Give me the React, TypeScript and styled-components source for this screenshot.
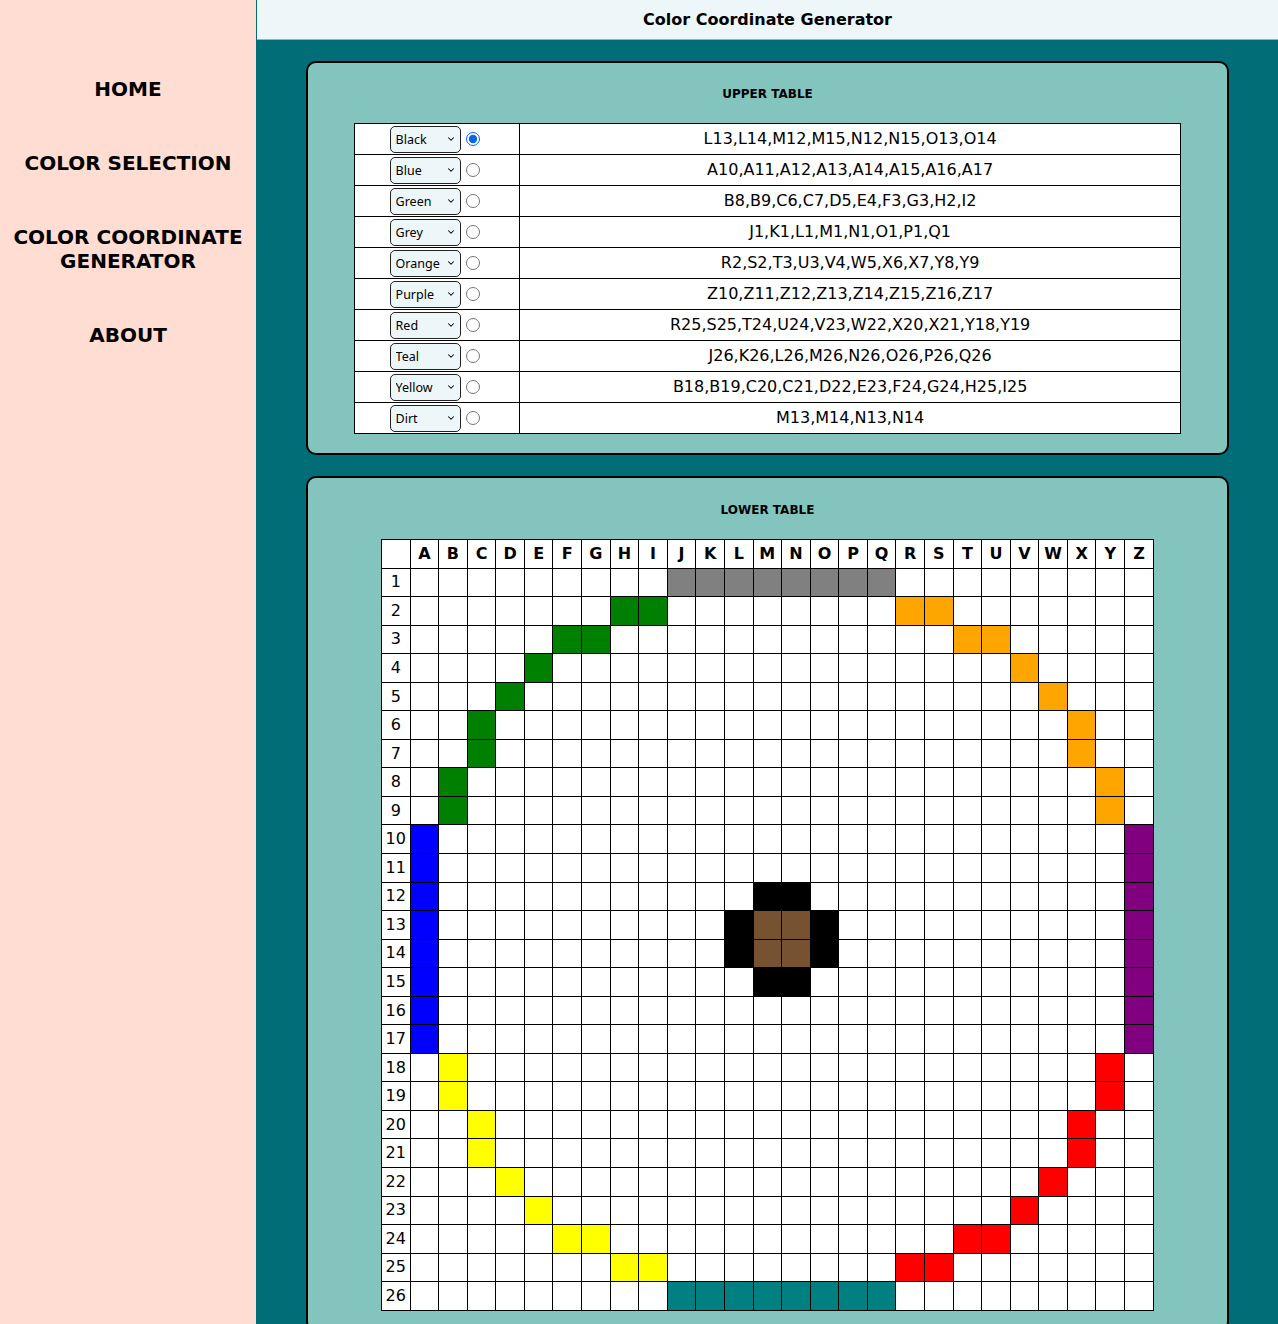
import React from "react";
import styled, { createGlobalStyle } from "styled-components";
import { ChevronDown } from "lucide-react";

const GlobalStyle = createGlobalStyle`
  html, body { margin: 0; padding: 0; }
  body {
    font-family: Verdana, "DejaVu Sans", sans-serif;
    color: #000;
    background: #006d77;
  }
  * { box-sizing: border-box; }
`;

const Page = styled.div`
  display: grid;
  grid-template-columns: 256px 1fr;
  min-height: 100vh;
`;

const Sidebar = styled.nav`
  background: #ffddd2;
  display: flex;
  flex-direction: column;
  align-items: center;
  gap: 50px;
  padding: 77px 6px 0;
`;

const NavItem = styled.a`
  font-family: Verdana, "DejaVu Sans", sans-serif;
  font-weight: bold;
  font-size: 20px;
  line-height: 24px;
  text-align: center;
  color: #000;
  text-decoration: none;
  text-transform: uppercase;
`;

const Main = styled.main`
  background: #006d77;
  display: flex;
  flex-direction: column;
  padding-left: 1px;
`;

const Header = styled.header`
  background: #edf6f9;
  height: 40px;
  border-bottom: 1px solid #a8adaf;
  display: flex;
  align-items: center;
  justify-content: center;
`;

const Title = styled.h1`
  margin: 0;
  font-size: 16px;
  font-weight: bold;
  line-height: 20px;
`;

const Content = styled.div`
  display: flex;
  flex-direction: column;
  align-items: center;
  gap: 21px;
  padding-top: 21px;
`;

const Card = styled.section<{ $top: number; $gap: number }>`
  width: 923px;
  background: #83c5be;
  border: 2px solid #000;
  border-radius: 10px;
  padding: ${(p) => p.$top}px 0 19px;
  display: flex;
  flex-direction: column;
  align-items: center;
  gap: ${(p) => p.$gap}px;
`;

const CardTitle = styled.h2`
  margin: 0;
  font-size: 12px;
  line-height: 15px;
  font-weight: bold;
  text-transform: uppercase;
`;

const UpperTable = styled.table`
  width: 90%;
  border-collapse: collapse;
  background: #fff;
  table-layout: fixed;
`;

const UpperRow = styled.tr`
  height: 31px;
`;

const ControlCell = styled.td`
  width: 20%;
  border: 1px solid #000;
  padding: 1px 0;
  text-align: center;
  white-space: nowrap;
`;

const CoordCell = styled.td`
  border: 1px solid #000;
  padding: 0;
  text-align: center;
  font-size: 16px;
  line-height: 20px;
`;

const ControlWrap = styled.div`
  display: inline-flex;
  align-items: center;
  gap: 5px;
  padding-right: 2px;
`;

const SelectWrap = styled.span`
  position: relative;
  display: inline-block;
  width: 71px;
  height: 27px;
`;

const ColorSelect = styled.select`
  appearance: none;
  -webkit-appearance: none;
  width: 71px;
  height: 27px;
  font-family: "Noto Sans", "Open Sans", sans-serif;
  font-size: 12.5px;
  background: #edf6f9;
  border: 1px solid #222;
  border-radius: 5px;
  padding: 0 16px 0 5px;
  color: #000;
`;

const Arrow = styled(ChevronDown)`
  position: absolute;
  right: 5px;
  top: 8px;
  width: 10px;
  height: 10px;
  color: #000;
  pointer-events: none;
`;

const Radio = styled.input`
  width: 14px;
  height: 14px;
  margin: 0 3px 0 0;
  accent-color: #0b66e4;
`;

const Grid = styled.table`
  width: 773px;
  border-collapse: collapse;
  table-layout: fixed;
  background: #fff;
`;

const GridRow = styled.tr`
  height: 28.56px;
`;

const HeadCell = styled.th`
  border: 1px solid #000;
  padding: 0;
  font-size: 16px;
  font-weight: bold;
  text-align: center;
  line-height: 20px;
`;

const NumCell = styled.td`
  border: 1px solid #000;
  padding: 0;
  font-size: 16px;
  text-align: center;
  line-height: 20px;
`;

const Cell = styled.td<{ $color?: string }>`
  border: 1px solid #000;
  padding: 0;
  background: ${(p) => p.$color ?? "#fff"};
`;

const colorDefs: { name: string; color: string; coords: string[] }[] = [
  { name: "Black", color: "#000000", coords: ["L13", "L14", "M12", "M15", "N12", "N15", "O13", "O14"] },
  { name: "Blue", color: "#0000ff", coords: ["A10", "A11", "A12", "A13", "A14", "A15", "A16", "A17"] },
  { name: "Green", color: "#008000", coords: ["B8", "B9", "C6", "C7", "D5", "E4", "F3", "G3", "H2", "I2"] },
  { name: "Grey", color: "#808080", coords: ["J1", "K1", "L1", "M1", "N1", "O1", "P1", "Q1"] },
  { name: "Orange", color: "#ffa500", coords: ["R2", "S2", "T3", "U3", "V4", "W5", "X6", "X7", "Y8", "Y9"] },
  { name: "Purple", color: "#800080", coords: ["Z10", "Z11", "Z12", "Z13", "Z14", "Z15", "Z16", "Z17"] },
  { name: "Red", color: "#ff0000", coords: ["R25", "S25", "T24", "U24", "V23", "W22", "X20", "X21", "Y18", "Y19"] },
  { name: "Teal", color: "#008080", coords: ["J26", "K26", "L26", "M26", "N26", "O26", "P26", "Q26"] },
  { name: "Yellow", color: "#ffff00", coords: ["B18", "B19", "C20", "C21", "D22", "E23", "F24", "G24", "H25", "I25"] },
  { name: "Dirt", color: "#775230", coords: ["M13", "M14", "N13", "N14"] },
];

const letters = "ABCDEFGHIJKLMNOPQRSTUVWXYZ".split("");
const names = colorDefs.map((c) => c.name);

const cellColor: Record<string, string> = {};
colorDefs.forEach((c) => c.coords.forEach((k) => (cellColor[k] = c.color)));

export default function App() {
  return (
    <>
      <GlobalStyle />
      <Page>
        <Sidebar>
          <NavItem>Home</NavItem>
          <NavItem>Color Selection</NavItem>
          <NavItem>Color Coordinate Generator</NavItem>
          <NavItem>About</NavItem>
        </Sidebar>
        <Main>
          <Header>
            <Title>Color Coordinate Generator</Title>
          </Header>
          <Content>
            <Card $top={24} $gap={21}>
              <CardTitle>Upper Table</CardTitle>
              <UpperTable>
                <tbody>
                  {colorDefs.map((c, i) => (
                    <UpperRow key={c.name}>
                      <ControlCell>
                        <ControlWrap>
                          <SelectWrap>
                            <ColorSelect defaultValue={c.name}>
                              {names.map((n) => (
                                <option key={n} value={n}>
                                  {n}
                                </option>
                              ))}
                            </ColorSelect>
                            <Arrow strokeWidth={2.5} />
                          </SelectWrap>
                          <Radio type="radio" name="active" defaultChecked={i === 0} />
                        </ControlWrap>
                      </ControlCell>
                      <CoordCell>{c.coords.join(",")}</CoordCell>
                    </UpperRow>
                  ))}
                </tbody>
              </UpperTable>
            </Card>
            <Card $top={25} $gap={21}>
              <CardTitle>Lower Table</CardTitle>
              <Grid>
                <thead>
                  <GridRow>
                    <HeadCell />
                    {letters.map((l) => (
                      <HeadCell key={l}>{l}</HeadCell>
                    ))}
                  </GridRow>
                </thead>
                <tbody>
                  {Array.from({ length: 26 }, (_, r) => (
                    <GridRow key={r}>
                      <NumCell>{r + 1}</NumCell>
                      {letters.map((l) => (
                        <Cell key={l} $color={cellColor[`${l}${r + 1}`]} />
                      ))}
                    </GridRow>
                  ))}
                </tbody>
              </Grid>
            </Card>
          </Content>
        </Main>
      </Page>
    </>
  );
}
